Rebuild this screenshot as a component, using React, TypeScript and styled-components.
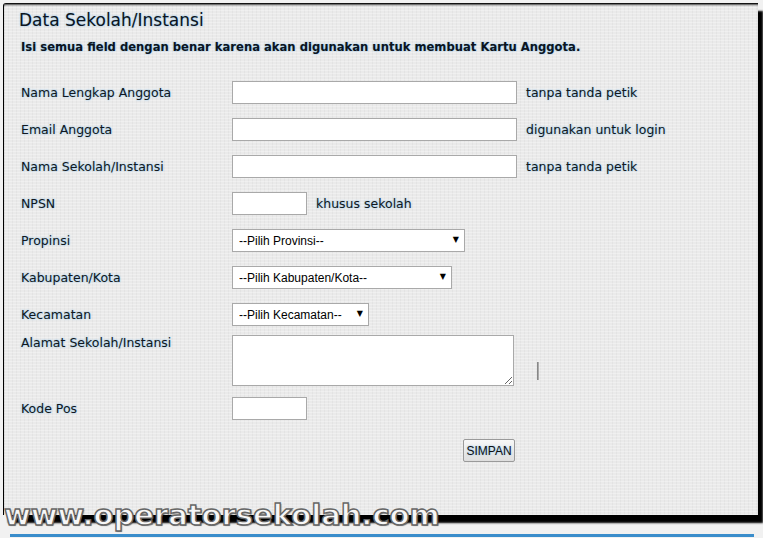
import React from "react";
import styled, { createGlobalStyle } from "styled-components";

const Global = createGlobalStyle`
  html, body { margin: 0; padding: 0; }
  body {
    width: 763px;
    height: 538px;
    overflow: hidden;
    background: #f1f1f1;
    font-family: "DejaVu Sans", Verdana, sans-serif;
  }
`;

const Frame = styled.div`
  position: relative;
  width: 763px;
  height: 538px;
  padding: 3px 0 0 3px;
  box-sizing: border-box;
`;

const Panel = styled.div`
  box-sizing: border-box;
  width: 755px;
  height: 512px;
  border-left: 1px solid #000;
  border-top: 1px solid #111;
  border-top-left-radius: 3px;
  background-color: #eaeaea;
  background-image:
    repeating-linear-gradient(0deg, rgba(255,255,255,0.3) 0 1px, rgba(0,0,0,0) 1px 3px),
    repeating-linear-gradient(90deg, rgba(0,0,0,0.03) 0 1px, rgba(0,0,0,0) 1px 4px);
  box-shadow: inset 0 2px 2px -1px #444, 5px 8px 2px #000;
  padding: 6px 0 0 15px;
`;

const glow = `0 0 2px rgba(120, 185, 235, 1)`;

const Title = styled.h1`
  margin: 0;
  font-size: 17px;
  line-height: 20px;
  font-weight: normal;
  color: #0c1420;
  text-shadow: ${glow};
`;

const Intro = styled.p`
  margin: 10px 0 0 2px;
  font-size: 11.6px;
  line-height: 14px;
  font-weight: bold;
  color: #0c1420;
  text-shadow: ${glow};
`;

const Form = styled.div`
  display: flex;
  flex-direction: column;
  margin-left: 2px;
  margin-top: 27px;
`;

const Row = styled.div<{ $mt: number; $top?: boolean }>`
  display: flex;
  align-items: ${(p) => (p.$top ? "flex-start" : "center")};
  margin-top: ${(p) => p.$mt}px;
`;

const Label = styled.div`
  width: 211px;
  flex: none;
  font-size: 12.5px;
  line-height: 15px;
  color: #111820;
  text-shadow: ${glow};
`;

const Hint = styled.span`
  margin-left: 9px;
  font-size: 12.5px;
  line-height: 15px;
  color: #111820;
  text-shadow: ${glow};
`;

const TextInput = styled.input<{ $w: number }>`
  box-sizing: border-box;
  width: ${(p) => p.$w}px;
  height: 23px;
  margin: 0;
  border: 1px solid #a9a9a9;
  background: #fff;
  padding: 0 3px;
  font-family: "Liberation Sans", Arial, sans-serif;
  font-size: 12px;
  outline: none;
`;

const SelectWrap = styled.div<{ $w: number }>`
  position: relative;
  width: ${(p) => p.$w}px;
  height: 23px;
  &::after {
    content: "▼";
    position: absolute;
    right: 6px;
    top: 6px;
    font-size: 8px;
    line-height: 10px;
    color: #000;
    pointer-events: none;
  }
`;

const Select = styled.select`
  box-sizing: border-box;
  appearance: none;
  -webkit-appearance: none;
  width: 100%;
  height: 23px;
  margin: 0;
  border: 1px solid #a9a9a9;
  border-radius: 0;
  background: #fff;
  padding: 0 0 0 6px;
  font-family: "Liberation Sans", Arial, sans-serif;
  font-size: 12px;
  color: #000;
  outline: none;
`;

const TextArea = styled.textarea`
  box-sizing: border-box;
  width: 282px;
  height: 51px;
  margin: 0;
  border: 1px solid #a9a9a9;
  background: #fff;
  outline: none;
`;

const Caret = styled.span`
  width: 2px;
  height: 18px;
  margin: 27px 0 0 23px;
  background: linear-gradient(90deg, #777, #bbb);
`;

const ButtonRow = styled.div`
  display: flex;
  margin-top: 19px;
  padding-left: 442px;
`;

const Button = styled.button`
  box-sizing: border-box;
  width: 52px;
  height: 23px;
  margin: 0;
  padding: 0;
  border: 1px solid #9a9a9a;
  border-radius: 2px;
  background: linear-gradient(#f8f8f8, #dedede);
  font-family: "Liberation Sans", Arial, sans-serif;
  font-size: 12px;
  color: #111;
  text-shadow: ${glow};
`;

const Watermark = styled.div`
  position: absolute;
  left: 4px;
  top: 499px;
  font-family: "DejaVu Sans", Verdana, sans-serif;
  font-weight: bold;
  font-size: 29px;
  line-height: 32px;
  color: #f7f7f7;
  -webkit-text-stroke: 1.4px #666;
  text-shadow: 1px 1px 1px rgba(0, 0, 0, 0.45);
`;

const BlueRule = styled.div`
  position: absolute;
  left: 10px;
  width: 744px;
  top: 534px;
  height: 3px;
  background: #3a8dcb;
`;

type Field =
  | { kind: "input"; label: string; w: number; hint?: string; mt: number }
  | { kind: "select"; label: string; w: number; text: string; mt: number };

const fields: Field[] = [
  { kind: "input", label: "Nama Lengkap Anggota", w: 285, hint: "tanpa tanda petik", mt: 0 },
  { kind: "input", label: "Email Anggota", w: 285, hint: "digunakan untuk login", mt: 14 },
  { kind: "input", label: "Nama Sekolah/Instansi", w: 285, hint: "tanpa tanda petik", mt: 14 },
  { kind: "input", label: "NPSN", w: 75, hint: "khusus sekolah", mt: 14 },
  { kind: "select", label: "Propinsi", w: 233, text: "--Pilih Provinsi--", mt: 14 },
  { kind: "select", label: "Kabupaten/Kota", w: 220, text: "--Pilih Kabupaten/Kota--", mt: 14 },
  { kind: "select", label: "Kecamatan", w: 137, text: "--Pilih Kecamatan--", mt: 14 },
];

export default function App() {
  return (
    <>
      <Global />
      <Frame>
        <Panel>
          <Title>Data Sekolah/Instansi</Title>
          <Intro>Isi semua field dengan benar karena akan digunakan untuk membuat Kartu Anggota.</Intro>
          <Form>
            {fields.map((f) => (
              <Row key={f.label} $mt={f.mt}>
                <Label>{f.label}</Label>
                {f.kind === "input" ? (
                  <>
                    <TextInput type="text" $w={f.w} />
                    {f.hint && <Hint>{f.hint}</Hint>}
                  </>
                ) : (
                  <SelectWrap $w={f.w}>
                    <Select defaultValue="">
                      <option value="">{f.text}</option>
                    </Select>
                  </SelectWrap>
                )}
              </Row>
            ))}
            <Row $mt={9} $top>
              <Label>Alamat Sekolah/Instansi</Label>
              <TextArea />
              <Caret />
            </Row>
            <Row $mt={11}>
              <Label>Kode Pos</Label>
              <TextInput type="text" $w={75} />
            </Row>
            <ButtonRow>
              <Button type="button">SIMPAN</Button>
            </ButtonRow>
          </Form>
        </Panel>
        <Watermark>www.operatorsekolah.com</Watermark>
        <BlueRule />
      </Frame>
    </>
  );
}
